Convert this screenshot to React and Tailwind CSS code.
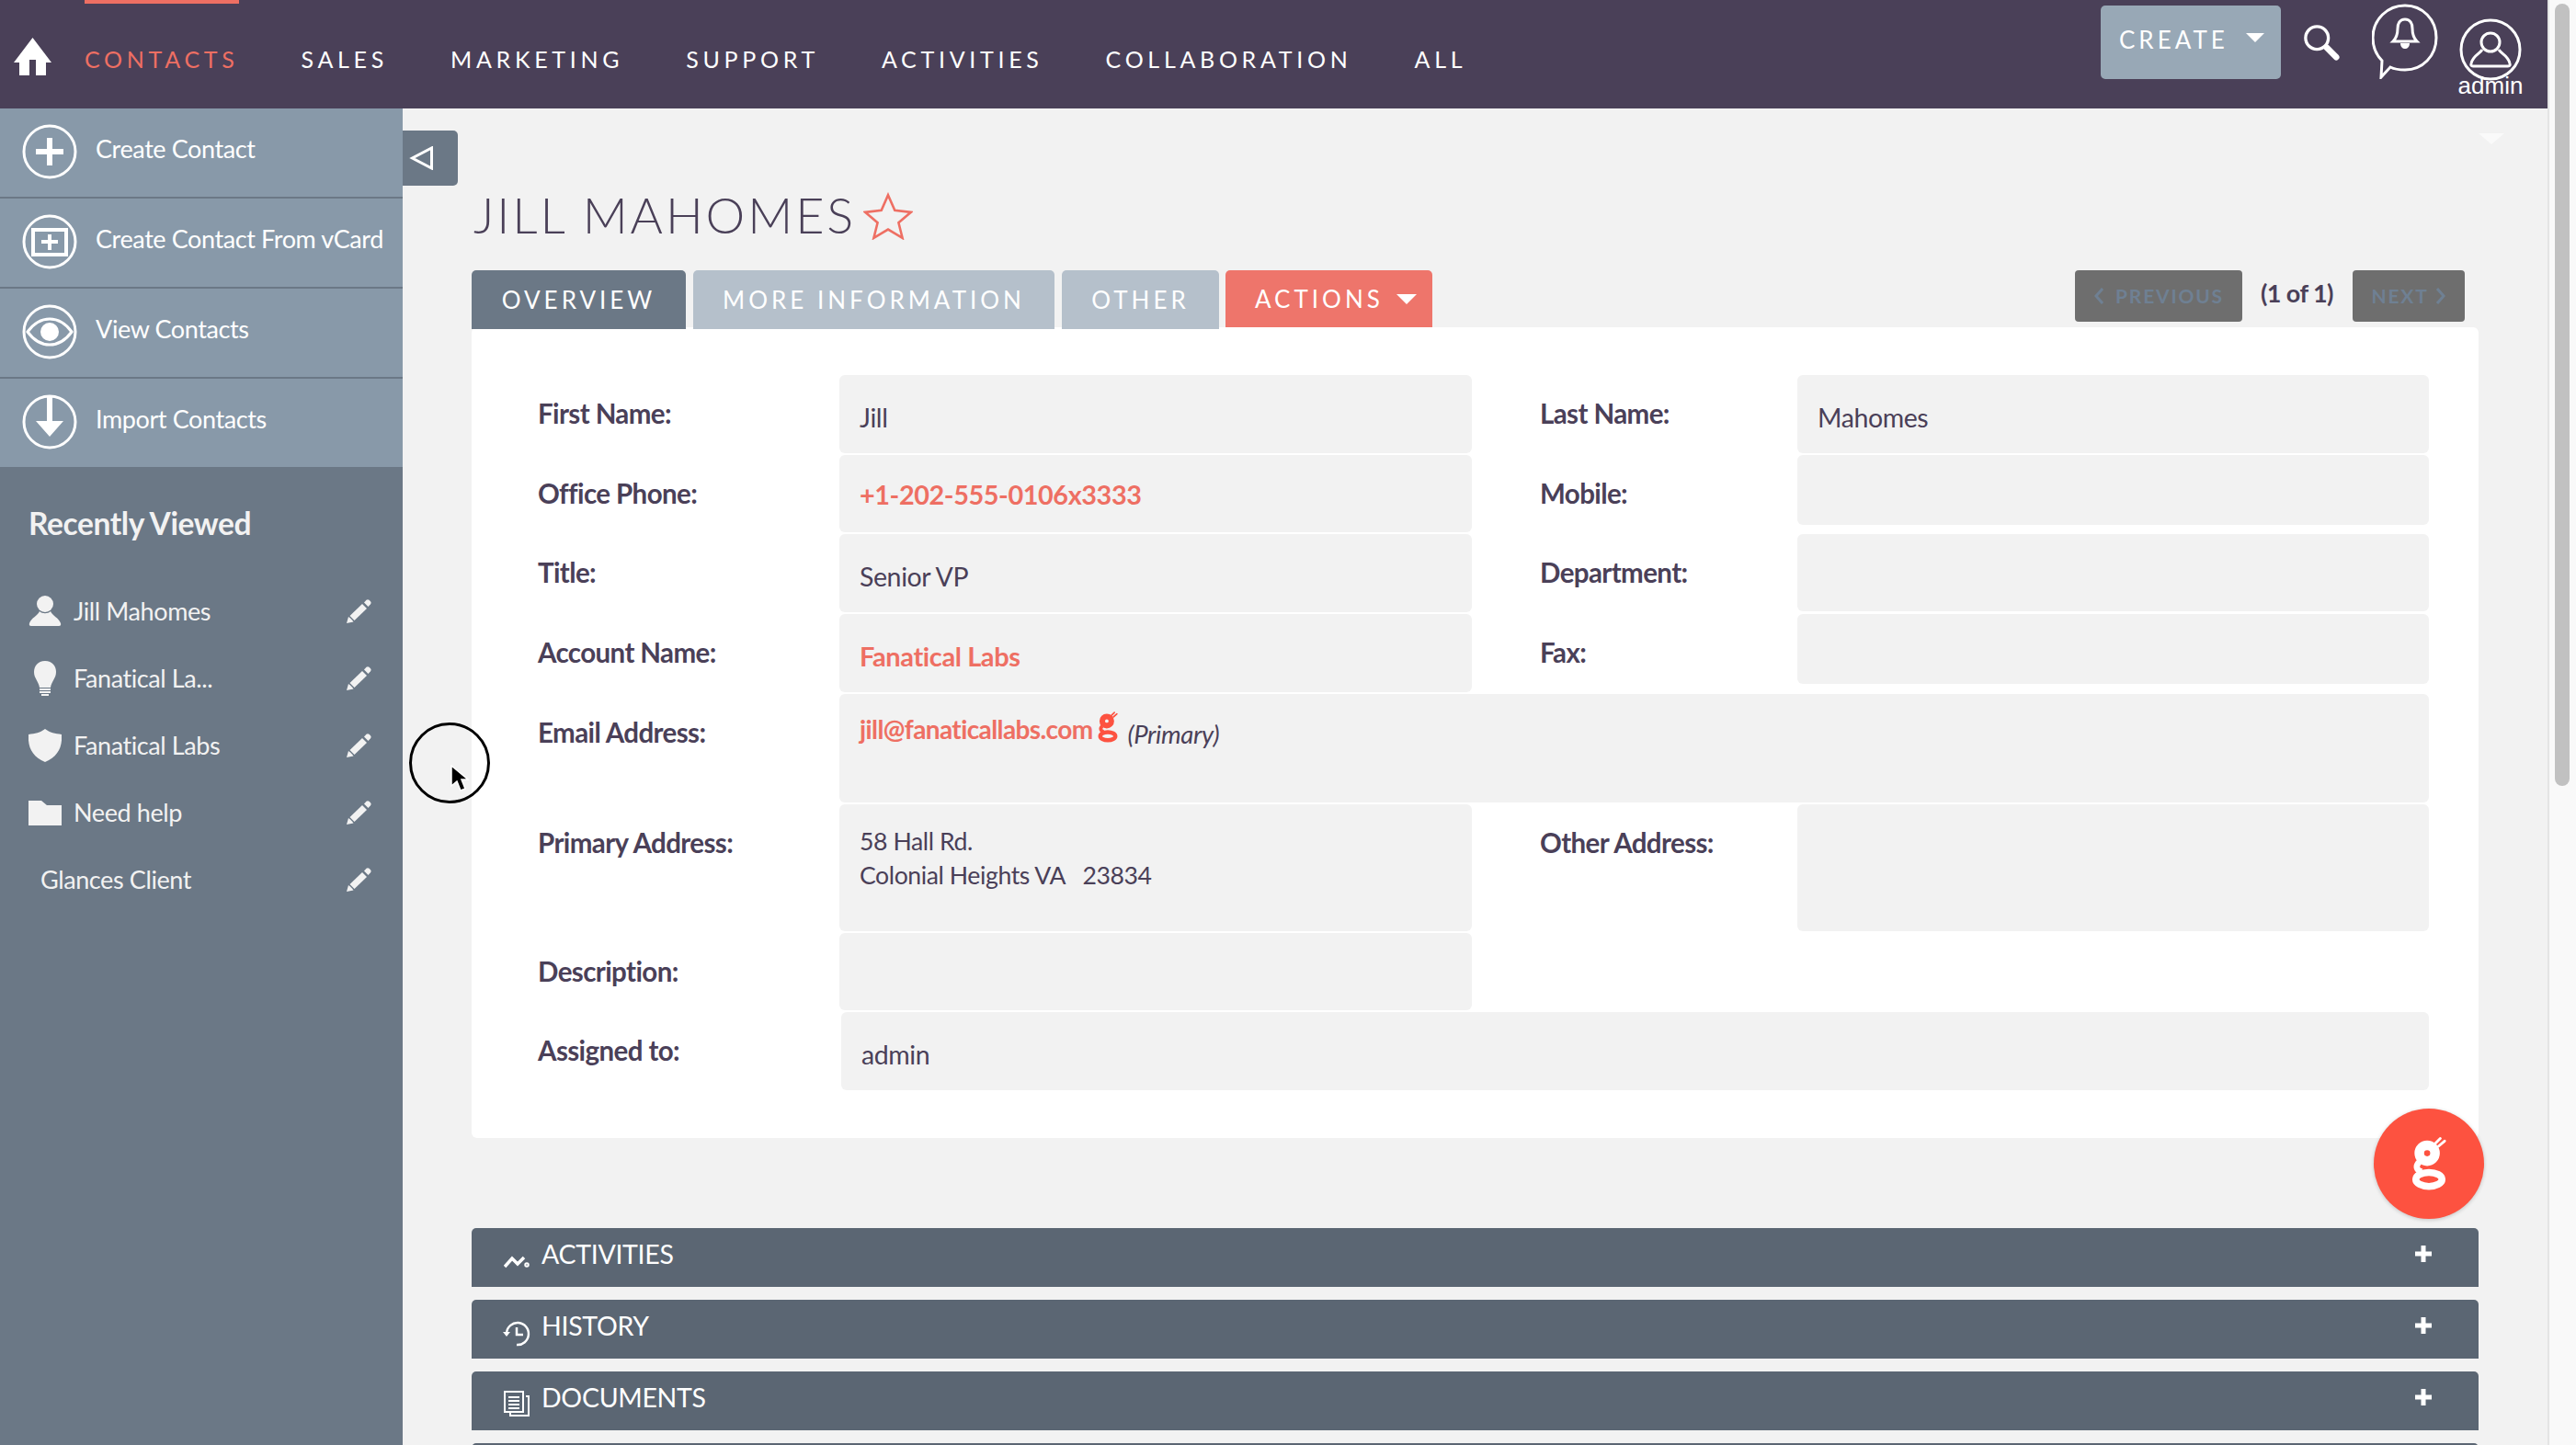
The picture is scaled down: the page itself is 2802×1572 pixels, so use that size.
const navItems = [
  { label: "CONTACTS", className: "ml-[36px] text-[#ee6f63]" },
  { label: "SALES", className: "ml-[68px] text-white" },
  { label: "MARKETING", className: "ml-[68px] text-white" },
  { label: "SUPPORT", className: "ml-[68px] text-white" },
  { label: "ACTIVITIES", className: "ml-[68px] text-white" },
  { label: "COLLABORATION", className: "ml-[68px] text-white" },
  { label: "ALL", className: "ml-[68px] text-white" },
];

function CircleIcon({ children }) {
  return (
    <svg viewBox="0 0 60 60" className="w-[60px] h-[60px] shrink-0" fill="none">
      <circle cx="30" cy="30" r="28" stroke="white" strokeWidth="3" />
      {children}
    </svg>
  );
}

const actions = [
  {
    label: "Create Contact",
    icon: <path d="M27 15h6v12h12v6H33v12h-6V33H15v-6h12z" fill="white" />,
  },
  {
    label: "Create Contact From vCard",
    icon: (
      <>
        <rect x="12" y="17" width="36" height="27" stroke="white" strokeWidth="4" />
        <path d="M28 22h4v6h7v4h-7v7h-4v-7h-7v-4h7z" fill="white" />
      </>
    ),
  },
  {
    label: "View Contacts",
    icon: (
      <>
        <path d="M6 30 C14 19 22 16 30 16 S46 19 54 30 C46 41 38 44 30 44 S14 41 6 30z" stroke="white" strokeWidth="3" />
        <circle cx="30" cy="30" r="10" fill="white" />
      </>
    ),
  },
  {
    label: "Import Contacts",
    icon: <path d="M27 1h6v28h12L30 46 15 29h12z" fill="white" />,
  },
];

const recents = [
  {
    label: "Jill Mahomes",
    icon: (
      <svg viewBox="0 0 36 36" className="w-[36px] h-[36px]" fill="#f2f2f2">
        <circle cx="18" cy="10" r="9" />
        <path d="M12 18c-2 5-9 7-11 13-.5 2 0 3 2 3h30c2 0 2.500-1 2-3-2-6-9-8-11-13-3 3-9 3-12 0z" />
      </svg>
    ),
  },
  {
    label: "Fanatical La...",
    icon: (
      <svg viewBox="0 0 36 38" className="w-[36px] h-[38px]" fill="#f2f2f2">
        <path d="M18 0C10 0 6 6 6 12c0 7 5 10 6 17h12c1-7 6-10 6-17C30 6 26 0 18 0z" />
        <rect x="12" y="30" width="12" height="2" />
        <rect x="12" y="33" width="12" height="2" />
        <rect x="14" y="36" width="8" height="2" />
      </svg>
    ),
  },
  {
    label: "Fanatical Labs",
    icon: (
      <svg viewBox="0 0 36 36" className="w-[36px] h-[36px]" fill="#f2f2f2">
        <path d="M18 0c5 4 11 5 18 6 1 14-4 24-18 30C4 30-1 20 0 6c7-1 13-2 18-6z" />
      </svg>
    ),
  },
  {
    label: "Need help",
    icon: (
      <svg viewBox="0 0 36 28" className="w-[36px] h-[28px]" fill="#f2f2f2">
        <path d="M0 1h14l6 5h16v22H0z" />
      </svg>
    ),
  },
  { label: "Glances Client", icon: null },
];

function PencilIcon() {
  return (
    <svg viewBox="0 0 27 26" className="ml-auto w-[27px] h-[26px] shrink-0" fill="#f2f2f2">
      <path d="M0 26l2-7 2 1.500 2 2 1.500 2z" />
      <path d="M3.500 18L17 5l5 5L8.500 23z" />
      <path d="M19 3.500l2.500-2.700c1-.8 2-.8 3 0l1.500 1.500c.8 1 .8 2 0 3L23.500 8z" />
    </svg>
  );
}

function GLogo({ className, fill }) {
  return (
    <svg viewBox="0 0 40 60" className={className} fill="none" stroke={fill}>
      <circle cx="18" cy="18" r="9" strokeWidth="11" />
      <path d="M27 7 L33 1 M31 10 L38 4" strokeWidth="3" strokeLinecap="round" />
      <path d="M9 28 C4 33 6 38 12 39" strokeWidth="7" />
      <ellipse cx="20" cy="48" rx="15" ry="8" strokeWidth="8" />
    </svg>
  );
}

function Label({ children, className = "" }) {
  return (
    <div className={`font-bold text-[29.500px] leading-[32px] text-[#4a4058] tracking-[-0.6px] ${className}`}>
      {children}
    </div>
  );
}

function ValueBox({ className = "", children }) {
  return <div className={`bg-[#f2f2f2] rounded-[6px] px-[22px] text-[28.5px] text-[#4a4058] tracking-[-0.4px] ${className}`}>{children}</div>;
}

function Row({ label, rightLabel, left, right, className = "" }) {
  return (
    <div className={`flex items-start ${className}`}>
      <Label className="w-[400px] shrink-0 pl-[72px] pt-[26px]">{label}</Label>
      {left}
      {rightLabel && <Label className="w-[354px] shrink-0 pl-[74px] pt-[26px]">{rightLabel}</Label>}
      {right}
    </div>
  );
}

const panels = [
  {
    label: "ACTIVITIES",
    icon: (
      <svg viewBox="0 0 28 15" className="w-[28px] h-[15px] mt-[29px]" fill="none" stroke="white" strokeWidth="3.500">
        <path d="M1 13 L9 4 L15 10 L22 3" />
        <circle cx="25" cy="11" r="1" />
      </svg>
    ),
  },
  {
    label: "HISTORY",
    icon: (
      <svg viewBox="0 0 30 28" className="w-[30px] h-[28px] mt-[23px]" fill="none" stroke="white" strokeWidth="2.500">
        <path d="M4 13a12 12 0 1 1 11 13" />
        <path d="M0 12h8l-4 5z" fill="white" stroke="none" />
        <path d="M15 7v8h7" />
      </svg>
    ),
  },
  {
    label: "DOCUMENTS",
    icon: (
      <svg viewBox="0 0 28 28" className="w-[28px] h-[28px] mt-[21px]" fill="none" stroke="white" strokeWidth="2">
        <rect x="1" y="1" width="20" height="22" />
        <path d="M5 7h12M5 11h12M5 15h12M5 19h12" />
        <path d="M24 6h3v21H7v-3" />
      </svg>
    ),
  },
];

export default function App() {
  return (
    <div className="relative flex w-[2802px] h-[1572px] overflow-hidden bg-[#f2f2f2] font-['Lato','Liberation_Sans',sans-serif]">
      <div className="flex flex-col w-[2771px] shrink-0">
        {/* top nav */}
        <header className="relative flex items-start h-[118px] shrink-0 bg-[#4a4058]">
          <svg viewBox="0 0 41 41" className="ml-[15px] mt-[41px] w-[41px] h-[41px] shrink-0" fill="white">
            <path d="M20.500 0L41 27h-6v14H24V24h-7v17H6V27H0z" />
          </svg>
          {navItems.map((item) => (
            <a key={item.label} className={`mt-[48px] text-[25px] leading-[32px] tracking-[4.700px] ${item.className}`}>
              {item.label}
            </a>
          ))}
          <div className="absolute top-0 left-[92px] w-[168px] h-[4px] bg-[#ee6f63]" />
          <div className="ml-auto mt-[6px] flex items-center justify-between w-[196px] h-[80px] rounded-[5px] bg-[#98a8b6] pl-[20px] pr-[18px] pb-[6px]">
            <span className="text-white text-[26px] tracking-[4px]">CREATE</span>
            <span className="w-0 h-0 mb-[4px] border-x-[10px] border-x-transparent border-t-[10px] border-t-white" />
          </div>
          <svg viewBox="0 0 42 42" className="ml-[23px] mt-[26px] w-[42px] h-[40px] shrink-0" fill="none" stroke="white">
            <circle cx="16" cy="16" r="13" strokeWidth="3.500" />
            <path d="M27 27 L38 38" strokeWidth="7" strokeLinecap="round" />
          </svg>
          <svg viewBox="0 0 72 82" className="ml-[34px] mt-[4px] w-[72px] h-[82px] shrink-0" fill="none">
            <path d="M10 80 L11 62 C4 55 1 46 1 37 C1 17 17 2 36 2 C55 2 70 17 70 37 C70 57 55 72 36 72 C29 72 24 71 20 69z" stroke="white" strokeWidth="3" />
            <path d="M36 17c-6 0-8 5-8 10 0 7-2 11-5 14h26c-3-3-5-7-5-14 0-5-2-10-8-10z" stroke="white" strokeWidth="3" />
            <path d="M31 43h10c0 8-10 8-10 0z" fill="white" />
          </svg>
          <div className="relative ml-[23px] mr-[28px] w-[68px] h-[118px] shrink-0">
            <svg viewBox="0 0 68 68" className="absolute top-[20px] left-0 w-[68px] h-[68px]" fill="none" stroke="white" strokeWidth="3">
              <circle cx="34" cy="34" r="32" />
              <circle cx="34" cy="26" r="10" />
              <path d="M25 34c-3 5-10 6-12 15-.5 2 0 3 2 3h38c2 0 2.500-1 2-3-2-9-9-10-12-15" />
            </svg>
            <span className="absolute -left-[4px] top-[79px] w-[76px] text-center text-white text-[26px] leading-[28px] font-['Liberation_Sans',sans-serif]">
              admin
            </span>
          </div>
        </header>

        <div className="flex flex-1 min-h-0">
          {/* sidebar */}
          <aside className="flex flex-col w-[438px] shrink-0 bg-[#6b7886]">
            {actions.map((a, i) => (
              <div
                key={a.label}
                className={`flex items-center pl-[24px] pb-[3px] bg-[#8899a9] text-white ${i < 3 ? "h-[98px] border-b-[2px] border-[#6b7886]" : "h-[96px]"}`}
              >
                <CircleIcon>{a.icon}</CircleIcon>
                <span className="ml-[20px] mb-[4px] text-[27px] tracking-[-0.4px] whitespace-nowrap">{a.label}</span>
              </div>
            ))}
            <h2 className="ml-[31px] mt-[41px] text-[33.500px] leading-[40px] font-bold text-[#f2f2f2] tracking-[-0.4px]">Recently Viewed</h2>
            <ul className="mt-[56px] flex flex-col gap-[33px]">
              {recents.map((r) => (
                <li key={r.label} className="flex items-center h-[40px] pl-[31px] pr-[34px] text-[#f2f2f2]">
                  {r.icon && <span className="flex justify-center w-[36px] mr-[13px]">{r.icon}</span>}
                  <span className={`text-[27px] tracking-[-0.4px] ${r.icon ? "" : "ml-[13px]"}`}>{r.label}</span>
                  <PencilIcon />
                </li>
              ))}
            </ul>
          </aside>

          {/* main content */}
          <main className="relative flex-1 min-w-0 pl-[75px]">
            <div className="absolute left-0 top-[24px] flex items-center pl-[7px] w-[60px] h-[60px] rounded-r-[5px] bg-[#6b7886]">
              <svg viewBox="0 0 26 26" className="w-[27px] h-[26px]" fill="none" stroke="white" strokeWidth="3">
                <path d="M24 2v22L3 13z" />
              </svg>
            </div>
            <div className="absolute left-[2258px] top-[27px] w-0 h-0 border-x-[14px] border-x-transparent border-t-[12px] border-t-[#fafafa]" />

            <div className="flex items-center w-[2183px] h-[176px]">
              <h1 className="ml-[2px] mt-[56px] font-light text-[54px] leading-[60px] text-[#4a4058] tracking-[2.900px]">JILL MAHOMES</h1>
              <svg viewBox="0 0 52 50" className="ml-[8px] mt-[58px] w-[54px] h-[52px]" fill="none" stroke="#ee6f63" strokeWidth="2.500">
                <path d="M26 3l7 16 17 2-13 11 4 16-15-9-15 9 4-16L2 21l17-2z" />
              </svg>
            </div>

            <div className="relative z-10 flex items-start w-[2183px] h-[64px]">
              <div className="flex h-[64px] bg-[#6b7886] rounded-t-[5px] w-[233px] items-center justify-center text-white text-[26px] tracking-[4px]">OVERVIEW</div>
              <div className="ml-[8px] flex h-[64px] bg-[#b5c0cb] rounded-t-[5px] w-[393px] items-center justify-center text-white text-[26px] tracking-[4px]">MORE INFORMATION</div>
              <div className="ml-[8px] flex h-[64px] bg-[#b5c0cb] rounded-t-[5px] w-[171px] items-center justify-center text-white text-[26px] tracking-[4px]">OTHER</div>
              <div className="ml-[7px] flex h-[62px] bg-[#ee756b] rounded-t-[5px] w-[225px] items-center pl-[32px] text-white text-[26px] tracking-[4px]">
                ACTIONS
                <span className="ml-[14px] w-0 h-0 border-x-[11px] border-x-transparent border-t-[11px] border-t-white" />
              </div>
              <div className="ml-auto mr-[15px] flex items-start">
                <div className="flex items-center justify-center gap-[12px] w-[182px] h-[56px] rounded-[4px] bg-[#6e6e6e] text-[#6f8093] font-bold text-[21px] tracking-[1.800px]">
                  <svg viewBox="0 0 12 20" className="w-[12px] h-[20px]" fill="none" stroke="#6f8093" strokeWidth="3">
                    <path d="M10 2L3 10l7 8" />
                  </svg>
                  PREVIOUS
                </div>
                <span className="ml-[20px] mr-[20px] mt-[5px] text-[27px] font-bold text-[#4a4058] tracking-[-0.6px] w-[80px] whitespace-nowrap">(1 of 1)</span>
                <div className="flex items-center justify-center gap-[7px] w-[122px] h-[56px] rounded-[4px] bg-[#6e6e6e] text-[#6f8093] font-bold text-[21px] tracking-[1.800px]">
                  NEXT
                  <svg viewBox="0 0 12 20" className="w-[12px] h-[20px]" fill="none" stroke="#6f8093" strokeWidth="3">
                    <path d="M2 2l7 8-7 8" />
                  </svg>
                </div>
              </div>
            </div>

            {/* detail card */}
            <div className="relative w-[2183px] h-[882px] pt-[52px] bg-white rounded-[6px] -mt-[2px]">
              <Row
                label="First Name:"
                rightLabel="Last Name:"
                left={<ValueBox className="w-[688px] h-[85px] pt-[29px] leading-[34px]">Jill</ValueBox>}
                right={<ValueBox className="w-[687px] h-[85px] pt-[29px] leading-[34px]">Mahomes</ValueBox>}
              />
              <Row
                className="mt-[2px]"
                label="Office Phone:"
                rightLabel="Mobile:"
                left={<ValueBox className="w-[688px] h-[84px] pt-[26px] leading-[34px] font-bold !text-[28.800px] text-[#ee6f63]">+1-202-555-0106x3333</ValueBox>}
                right={<ValueBox className="w-[687px] h-[76px]" />}
              />
              <Row
                className="mt-[2px]"
                label="Title:"
                rightLabel="Department:"
                left={<ValueBox className="w-[688px] h-[85px] pt-[29px] leading-[34px]">Senior VP</ValueBox>}
                right={<ValueBox className="w-[687px] h-[84px]" />}
              />
              <Row
                className="mt-[2px]"
                label="Account Name:"
                rightLabel="Fax:"
                left={<ValueBox className="w-[688px] h-[85px] pt-[29px] leading-[34px] font-bold !text-[29px] text-[#ee6f63]">Fanatical Labs</ValueBox>}
                right={<ValueBox className="w-[687px] h-[76px]" />}
              />
              <Row
                className="mt-[2px]"
                label="Email Address:"
                left={
                  <ValueBox className="flex items-start w-[1729px] h-[118px] pt-[21px] leading-[34px]">
                    <span className="font-bold text-[#ee6f63] text-[28px] tracking-[-0.6px]">jill@fanaticallabs.com</span>
                    <GLogo className="ml-[5px] -mt-[3px] w-[22px] h-[36px]" fill="#fd5240" />
                    <span className="ml-[11px] mt-[6px] italic text-[27.500px]">(Primary)</span>
                  </ValueBox>
                }
              />
              <Row
                className="mt-[2px]"
                label="Primary Address:"
                rightLabel="Other Address:"
                left={
                  <ValueBox className="w-[688px] h-[138px] pt-[22px] !text-[26.600px] leading-[37px]">
                    58 Hall Rd.
                    <br />
                    Colonial Heights VA&nbsp;&nbsp;&nbsp;23834
                  </ValueBox>
                }
                right={<ValueBox className="w-[687px] h-[138px]" />}
              />
              <Row
                className="mt-[2px]"
                label="Description:"
                left={<ValueBox className="w-[688px] h-[84px]" />}
              />
              <Row
                className="mt-[2px]"
                label="Assigned to:"
                left={<ValueBox className="ml-[2px] w-[1727px] h-[85px] pt-[29px] leading-[34px]">admin</ValueBox>}
              />
            </div>

            {/* collapsed panels */}
            <div className="mt-[98px] flex flex-col gap-[14px] w-[2183px]">
              {panels.map((p) => (
                <div key={p.label} className="flex items-start h-[64px] shrink-0 pl-[34px] pr-[51px] rounded-t-[5px] bg-[#5b6673] text-white">
                  <span className="flex justify-center w-[30px] mr-[12px]">{p.icon}</span>
                  <span className="mt-[10px] text-[28.500px] leading-[36px] tracking-[-0.3px]">{p.label}</span>
                  <svg viewBox="0 0 18 18" className="ml-auto mt-[19px] w-[18px] h-[18px]" fill="white">
                    <path d="M6.500 0h5v6.500H18v5h-6.500V18h-5v-6.500H0v-5h6.500z" />
                  </svg>
                </div>
              ))}
              <div className="h-[64px] shrink-0 rounded-t-[5px] bg-[#5b6673]" />
            </div>
          </main>
        </div>
      </div>

      {/* browser scrollbar */}
      <div className="flex-1 bg-[#f9f9f9] border-l-[2px] border-[#e4e4e4] pl-[6px] pt-[4px]">
        <div className="w-[16px] h-[851px] rounded-full bg-[#c1c1c1]" />
      </div>

      {/* chat button */}
      <div className="absolute left-[2582px] top-[1206px] flex items-center justify-center w-[120px] h-[120px] rounded-full bg-[#fd5240] shadow-[0_1px_4px_rgba(0,0,0,0.2)]">
        <GLogo className="w-[38px] h-[60px]" fill="white" />
      </div>

      {/* recorded mouse pointer */}
      <div className="absolute left-[445px] top-[786px] w-[88px] h-[88px] rounded-full border-[3px] border-black" />
      <svg viewBox="0 0 20 30" className="absolute left-[490px] top-[832px] w-[20px] h-[30px]" fill="black" stroke="white" strokeWidth="1.500">
        <path d="M1 1v22l6-5 4 10 5-2-4-10h7z" />
      </svg>
    </div>
  );
}
